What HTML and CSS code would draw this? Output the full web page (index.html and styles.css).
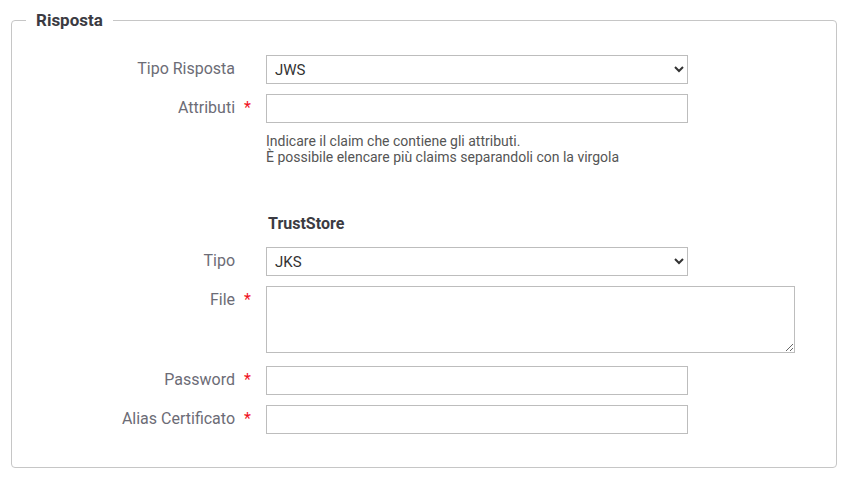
FILE: index.html
```html
<!DOCTYPE html>
<html lang="it">
<head>
<meta charset="utf-8">
<title>Risposta</title>
<link rel="stylesheet" href="styles.css">
</head>
<body>
<div class="page">
  <fieldset class="box">
    <legend class="box-title">Risposta</legend>
    <div class="row">
      <label class="lbl">Tipo Risposta <span class="req req-off">*</span></label>
      <select class="ctl"><option>JWS</option></select>
    </div>
    <div class="row">
      <label class="lbl">Attributi <span class="req">*</span></label>
      <input class="ctl" type="text">
    </div>
    <div class="row help-row">
      <span></span>
      <div class="help">Indicare il claim che contiene gli attributi.<br>È possibile elencare più claims separandoli con la virgola</div>
    </div>
    <div class="row head-row">
      <span></span>
      <div class="subhead">TrustStore</div>
    </div>
    <div class="row">
      <label class="lbl">Tipo <span class="req req-off">*</span></label>
      <select class="ctl"><option>JKS</option></select>
    </div>
    <div class="row row-area">
      <label class="lbl">File <span class="req">*</span></label>
      <textarea class="area"></textarea>
    </div>
    <div class="row">
      <label class="lbl">Password <span class="req">*</span></label>
      <input class="ctl" type="password">
    </div>
    <div class="row">
      <label class="lbl">Alias Certificato <span class="req">*</span></label>
      <input class="ctl" type="text">
    </div>
  </fieldset>
</div>
</body>
</html>
```
FILE: styles.css
```css
html, body {
  margin: 0;
  padding: 0;
  background: #fff;
}
body {
  font-family: Roboto, "Liberation Sans", sans-serif;
  color: #333;
}
.page {
  padding: 9px 11px 0 11px;
}
.box {
  margin: 0;
  border: 1px solid #c6c6c6;
  border-radius: 4px;
  padding: 24px 0 33px 0;
}
.box-title {
  margin-left: 14px;
  padding: 0 10px;
  font-size: 17px;
  font-weight: 700;
  line-height: 22px;
  color: #3b3b42;
}
.row {
  display: grid;
  grid-template-columns: 241px 1fr;
  column-gap: 13px;
  align-items: start;
  margin-bottom: 10px;
}
.lbl {
  text-align: right;
  font-size: 16px;
  line-height: 27px;
  color: #6c6c76;
  white-space: nowrap;
}
.req {
  color: #f0141e;
  margin-left: 5px;
  display: inline-block;
  width: 9px;
  text-align: left;
}
.req-off {
  visibility: hidden;
}
.ctl {
  box-sizing: border-box;
  width: 422px;
  height: 29px;
  border: 1px solid #bdbdbd;
  border-radius: 0;
  background: #fff;
  font-family: Roboto, "Liberation Sans", sans-serif;
  font-size: 15px;
  color: #333;
  padding: 0 8px;
  margin: 0;
}
select.ctl {
  padding: 0 4px;
}
.help-row {
  margin-top: 2px;
  margin-bottom: 0;
}
.help {
  font-size: 14px;
  line-height: 16px;
  color: #555;
}
.head-row {
  margin-top: 49px;
  margin-bottom: 13px;
}
.subhead {
  font-size: 16px;
  font-weight: 700;
  line-height: 20px;
  color: #3b3b42;
  padding-left: 2px;
}
.area {
  box-sizing: border-box;
  width: 529px;
  height: 67px;
  border: 1px solid #bdbdbd;
  border-radius: 0;
  margin: 0;
  display: block;
  font-family: Roboto, "Liberation Sans", sans-serif;
}
.row-area {
  margin-bottom: 13px;
}
.row:last-child {
  margin-bottom: 0;
}
```
